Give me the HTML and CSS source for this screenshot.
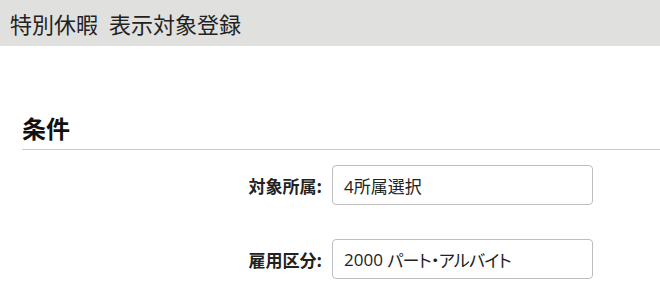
FILE: index.html
```html
<!DOCTYPE html>
<html lang="ja">
<head>
<meta charset="utf-8">
<link rel="stylesheet" href="styles.css">
</head>
<body>
<header class="page-header">
  <h1 class="page-title">特別休暇 表示対象登録</h1>
</header>
<main class="content">
  <section class="section">
    <h2 class="section-title">条件</h2>
    <div class="form">
      <div class="form-row">
        <label class="form-label">対象所属:</label>
        <div class="form-field">4所属選択</div>
      </div>
      <div class="form-row">
        <label class="form-label">雇用区分:</label>
        <div class="form-field">2000 <span class="kana">パート・アルバイト</span></div>
      </div>
    </div>
  </section>
</main>
</body>
</html>
```

FILE: styles.css
```css
html, body {
  margin: 0;
  padding: 0;
  background: #ffffff;
  font-family: "Open Sans", "Noto Sans CJK JP", sans-serif;
  color: #222222;
}

.page-header {
  background: #e0e0df;
  height: 46px;
  display: flex;
  align-items: center;
  padding-left: 10px;
}

.page-title {
  margin: 0;
  font-size: 22px;
  font-weight: 400;
  color: #222;
  font-family: "Noto Sans CJK JP", sans-serif;
  line-height: 1;
  word-spacing: 6px;
}

.content {
  padding: 0 0 0 22px;
}

.section-title {
  margin: 67px 0 0 0;
  padding-bottom: 6px;
  font-size: 24px;
  line-height: 30px;
  font-weight: 700;
  color: #111;
  font-family: "Noto Sans CJK JP", sans-serif;
  border-bottom: 1px solid #cccccc;
}

.form {
  display: flex;
  flex-direction: column;
  gap: 34px;
  margin-top: 15px;
}

.form-row {
  display: grid;
  grid-template-columns: 300px 261px;
  column-gap: 10px;
  align-items: center;
}

.form-label {
  text-align: right;
  font-size: 17px;
  font-weight: 700;
  color: #222;
  font-family: "Noto Sans CJK JP", sans-serif;
}

.form-field {
  box-sizing: border-box;
  height: 40px;
  border: 1px solid #bdbdbd;
  border-radius: 4px;
  padding: 0 11px;
  display: flex;
  align-items: center;
  font-size: 17px;
  color: #222;
  white-space: pre;
}

.kana {
  font-family: "Noto Sans CJK JP", sans-serif;
  font-feature-settings: "palt";
  letter-spacing: -0.7px;
}
```
